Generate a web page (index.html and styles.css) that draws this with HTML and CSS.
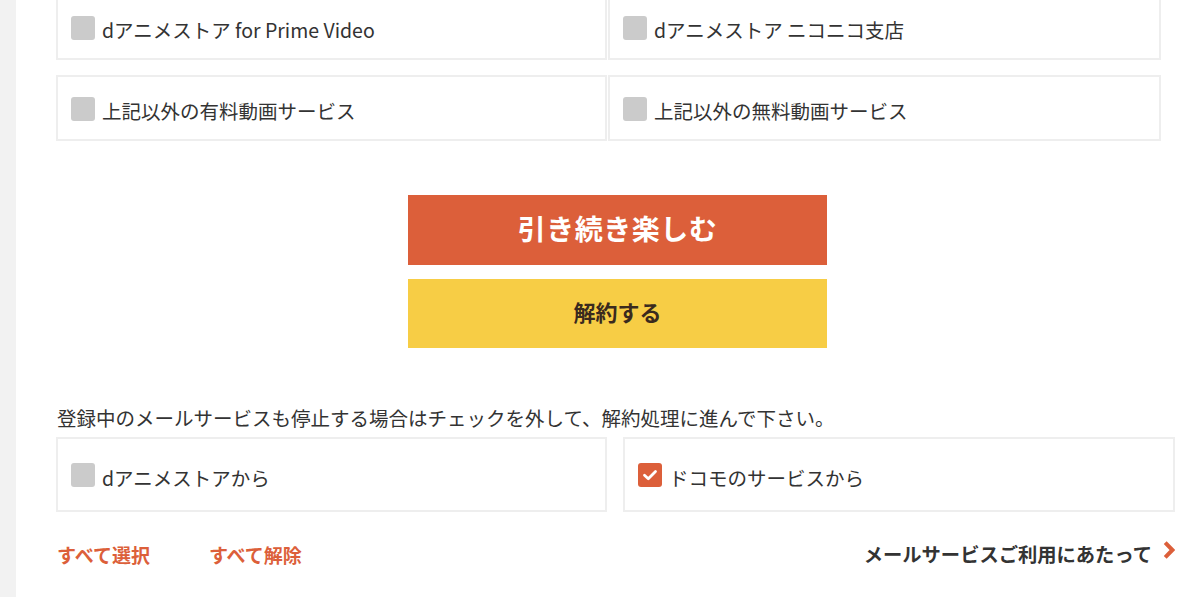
FILE: index.html
```html
<!DOCTYPE html>
<html lang="ja">
<head>
<meta charset="utf-8">
<title>解約</title>
<link rel="stylesheet" href="styles.css">
</head>
<body>
<div class="page">
  <aside class="strip"></aside>
  <main class="main">
    <div class="svc-grid">
      <label class="card"><span class="box"></span><span class="lbl">dアニメストア for Prime Video</span></label>
      <label class="card"><span class="box"></span><span class="lbl">dアニメストア ニコニコ支店</span></label>
      <label class="card"><span class="box"></span><span class="lbl">上記以外の有料動画サービス</span></label>
      <label class="card"><span class="box"></span><span class="lbl">上記以外の無料動画サービス</span></label>
    </div>

    <div class="actions">
      <button class="btn btn-continue">引き続き楽しむ</button>
      <button class="btn btn-cancel">解約する</button>
    </div>

    <p class="note">登録中のメールサービスも停止する場合はチェックを外して、解約処理に進んで下さい。</p>

    <div class="mail-grid">
      <label class="card card-tall"><span class="box"></span><span class="lbl">dアニメストアから</span></label>
      <label class="card card-tall"><span class="box box-on"><svg viewBox="0 0 24 24" width="24" height="24"><path d="M6.5 12.3 L10.3 15.8 L17.5 8.6" fill="none" stroke="#fff" stroke-width="2.8" stroke-linecap="round" stroke-linejoin="round"/></svg></span><span class="lbl">ドコモのサービスから</span></label>
    </div>

    <div class="links">
      <div class="links-left">
        <a class="op">すべて選択</a>
        <a class="op">すべて解除</a>
      </div>
      <a class="more">メールサービスご利用にあたって<svg class="chev" viewBox="0 0 12 18" width="12" height="18"><path d="M2.2 1.6 L9.4 9 L2.2 16.4" fill="none" stroke="#dc5f3a" stroke-width="4" stroke-linejoin="miter" stroke-miterlimit="10"/></svg></a>
    </div>
  </main>
</div>
</body>
</html>
```

FILE: styles.css
```css
html, body {
  margin: 0;
  padding: 0;
  background: #fff;
  height: 100%;
  overflow: hidden;
}
body {
  font-family: "Noto Sans CJK JP", "Noto Sans", sans-serif;
  color: #333;
}
.page {
  display: flex;
  min-height: 597px;
}
.strip {
  width: 16px;
  flex: none;
  background: #f2f2f2;
}
.main {
  width: 1119px;
  padding-left: 40px;
}
.svc-grid {
  margin-top: -6px;
  width: 1105px;
  display: grid;
  grid-template-columns: 551px 553px;
  column-gap: 1px;
  row-gap: 15px;
}
.card {
  box-sizing: border-box;
  height: 66px;
  border: 2px solid #eeeeee;
  display: flex;
  align-items: center;
  padding-left: 13px;
}
.card-tall {
  height: 75px;
}
.box {
  width: 24px;
  height: 24px;
  border-radius: 3px;
  background: #cbcbcb;
  flex: none;
  display: flex;
  margin-top: 1px;
}
.box-on {
  background: #dc5f3a;
}
.lbl {
  margin-left: 7px;
  padding-top: 6px;
  font-size: 19.5px;
  line-height: 1;
  color: #333;
}
.actions {
  margin-top: 54px;
  display: flex;
  flex-direction: column;
  align-items: center;
  gap: 14px;
  padding-left: 4px;
}
.btn {
  width: 419px;
  border: none;
  font-family: "Noto Sans CJK JP", "Noto Sans", sans-serif;
  font-weight: 700;
  display: flex;
  align-items: center;
  justify-content: center;
  padding: 0 0 4px 0;
}
.btn-continue {
  height: 70px;
  background: #dc5f3a;
  color: #fff;
  font-size: 28px;
  letter-spacing: 0.5px;
}
.btn-cancel {
  height: 69px;
  background: #f7cd45;
  color: #3a2a1e;
  font-size: 22px;
  padding-bottom: 6px;
}
.note {
  margin: 55px 0 0 1px;
  font-size: 19.5px;
  line-height: 29px;
  color: #333;
}
.mail-grid {
  margin-top: 5px;
  display: grid;
  grid-template-columns: 551px 552px;
  column-gap: 16px;
}
.links {
  margin-top: 28px;
  display: flex;
  justify-content: space-between;
  align-items: center;
}
.links-left {
  display: flex;
  gap: 59px;
  padding-left: 1px;
}
.op {
  font-size: 19px;
  font-weight: 700;
  color: #dc5f3a;
}
.more {
  display: flex;
  align-items: center;
  font-size: 19.3px;
  font-weight: 700;
  color: #333;
}
.chev {
  margin-left: 11px;
  margin-top: -8px;
}
```
